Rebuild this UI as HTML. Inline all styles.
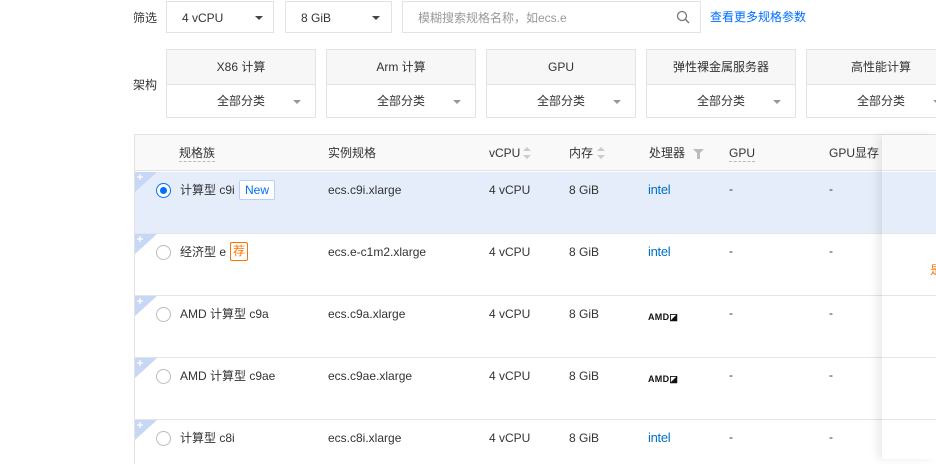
<!DOCTYPE html>
<html><head><meta charset="utf-8"><style>
*{margin:0;padding:0;box-sizing:border-box}
body{width:936px;height:459px;overflow:hidden;background:#fff;font-family:"Liberation Sans","Noto Sans CJK SC",sans-serif;font-size:12px;color:#333;position:relative;line-height:16px}
.a{position:absolute;white-space:nowrap}
.box{position:absolute;border:1px solid #e3e3e3;background:#fff}
.caret{position:absolute;width:0;height:0;border-left:4px solid transparent;border-right:4px solid transparent;border-top:4px solid #444}
.caretg{border-top-color:#999}
.radio{position:absolute;width:15px;height:15px;border-radius:50%;border:1px solid #bbb;background:#fff}
.intel{position:absolute;color:#0071c5;font-size:13px;letter-spacing:-0.3px}
.amd{position:absolute;font-weight:bold;font-size:9px;color:#111;letter-spacing:0.3px}
.arch{position:absolute;border:1px solid #e3e3e3;background:#fff;width:150px;height:69px}
.arch .h{height:35px;background:#f7f7f7;border-bottom:1px solid #e3e3e3;text-align:center;line-height:34px}
.arch .b{text-align:center;line-height:32px}
</style></head><body>
<div class="a" style="left:133px;top:10px">筛选</div>
<div class="box" style="left:166px;top:1px;width:108px;height:32px"><span class="a" style="left:15px;top:8px">4 vCPU</span><span class="caret" style="left:88px;top:14px"></span></div>
<div class="box" style="left:285px;top:1px;width:107px;height:32px"><span class="a" style="left:15px;top:8px">8 GiB</span><span class="caret" style="left:86px;top:14px"></span></div>
<div class="box" style="left:402px;top:1px;width:299px;height:32px"><span class="a" style="left:15px;top:8px;color:#999">模糊搜索规格名称，如ecs.e</span>
<svg class="a" style="left:273px;top:8px" width="14" height="14" viewBox="0 0 14 14"><circle cx="6" cy="6" r="4.5" fill="none" stroke="#777" stroke-width="1.3"/><path d="M9.3 9.3L13 13" stroke="#777" stroke-width="1.4"/></svg></div>
<div class="a" style="left:710px;top:9px;color:#006eff">查看更多规格参数</div>
<div class="a" style="left:133px;top:77px">架构</div>

<div class="arch" style="left:166px;top:49px"><div class="h">X86 计算</div><div class="b">全部分类</div><span class="caret caretg" style="left:126px;top:50px"></span></div>
<div class="arch" style="left:326px;top:49px"><div class="h">Arm 计算</div><div class="b">全部分类</div><span class="caret caretg" style="left:126px;top:50px"></span></div>
<div class="arch" style="left:486px;top:49px"><div class="h">GPU</div><div class="b">全部分类</div><span class="caret caretg" style="left:126px;top:50px"></span></div>
<div class="arch" style="left:646px;top:49px"><div class="h">弹性裸金属服务器</div><div class="b">全部分类</div><span class="caret caretg" style="left:126px;top:50px"></span></div>
<div class="arch" style="left:806px;top:49px"><div class="h">高性能计算</div><div class="b">全部分类</div><span class="caret caretg" style="left:126px;top:50px"></span></div>

<div class="a" style="left:134px;top:134px;width:802px;height:330px;border-left:1px solid #e3e3e3;border-top:1px solid #e3e3e3"></div>
<div class="a" style="left:135px;top:135px;width:801px;height:36px;background:#f9f9f9;border-bottom:1px solid #e3e3e3"></div>
<div class="a" style="left:135px;top:172px;width:801px;height:61px;background:#e5edfa"></div>
<div class="a" style="left:135px;top:233px;width:801px;height:1px;background:#e5e5e5"></div>
<div class="a" style="left:135px;top:295px;width:801px;height:1px;background:#e5e5e5"></div>
<div class="a" style="left:135px;top:357px;width:801px;height:1px;background:#e5e5e5"></div>
<div class="a" style="left:135px;top:419px;width:801px;height:1px;background:#e5e5e5"></div>
<div class="a" style="left:882px;top:135px;width:54px;height:324px;background:#fff;box-shadow:-5px 0 8px rgba(0,0,0,0.08)"></div>
<div class="a" style="left:882px;top:135px;width:54px;height:36px;background:#f9f9f9;border-bottom:1px solid #e3e3e3"></div>
<div class="a" style="left:882px;top:172px;width:54px;height:61px;background:#e5edfa"></div>
<div class="a" style="left:882px;top:233px;width:54px;height:1px;background:#e5e5e5"></div>
<div class="a" style="left:882px;top:295px;width:54px;height:1px;background:#e5e5e5"></div>
<div class="a" style="left:882px;top:357px;width:54px;height:1px;background:#e5e5e5"></div>
<div class="a" style="left:882px;top:419px;width:54px;height:1px;background:#e5e5e5"></div>
<div class="a" style="left:930px;top:262px;color:#ff7200">是</div>

<div class="a" style="left:179px;top:145px;border-bottom:1px dashed #bbb;line-height:16px">规格族</div>
<div class="a" style="left:328px;top:145px">实例规格</div>
<div class="a" style="left:489px;top:145px">vCPU</div>
<svg class="a" style="left:523px;top:147px" width="8" height="12"><path d="M4 0L8 4H0z" fill="#ccc"/><path d="M4 12L8 8H0z" fill="#ccc"/></svg>
<div class="a" style="left:569px;top:145px">内存</div>
<svg class="a" style="left:597px;top:147px" width="8" height="12"><path d="M4 0L8 4H0z" fill="#ccc"/><path d="M4 12L8 8H0z" fill="#ccc"/></svg>
<div class="a" style="left:649px;top:145px">处理器</div>
<svg class="a" style="left:693px;top:149px" width="11" height="10"><path d="M0 0H11L7 4V10H4V4z" fill="#bbb"/></svg>
<div class="a" style="left:729px;top:145px;border-bottom:1px dashed #bbb;line-height:16px">GPU</div>
<div class="a" style="left:829px;top:145px">GPU显存</div>

<svg class="a" style="left:135px;top:172px" width="22" height="20"><path d="M0 0H22L0 20z" fill="#c7d8f6"/><path d="M5 2V8M2 5H8" stroke="#fff" stroke-width="1.3"/></svg>
<div class="radio" style="left:156px;top:183px;border-color:#006eff"><div style="position:absolute;left:3px;top:3px;width:7px;height:7px;border-radius:50%;background:#006eff"></div></div>
<div class="a" style="left:180px;top:182px">计算型 c9i</div>
<div class="a" style="left:239px;top:180px;border:1px solid #b8cff5;background:#fff;color:#006eff;padding:0 5px;line-height:18px;font-size:12px;border-radius:2px">New</div>
<div class="a" style="left:328px;top:182px">ecs.c9i.xlarge</div>
<div class="a" style="left:489px;top:182px">4 vCPU</div>
<div class="a" style="left:569px;top:182px">8 GiB</div>
<div class="intel" style="left:648px;top:182px">intel</div>
<div class="a" style="left:729px;top:181px">-</div>
<div class="a" style="left:829px;top:181px">-</div>

<svg class="a" style="left:135px;top:234px" width="22" height="20"><path d="M0 0H22L0 20z" fill="#c7d8f6"/><path d="M5 2V8M2 5H8" stroke="#fff" stroke-width="1.3"/></svg>
<div class="radio" style="left:156px;top:245px"></div>
<div class="a" style="left:180px;top:244px">经济型 e</div>
<div class="a" style="left:230px;top:242px;border:1px solid #ff7200;color:#ff7200;padding:0 2px;line-height:17px;border-radius:2px">荐</div>
<div class="a" style="left:328px;top:244px">ecs.e-c1m2.xlarge</div>
<div class="a" style="left:489px;top:244px">4 vCPU</div>
<div class="a" style="left:569px;top:244px">8 GiB</div>
<div class="intel" style="left:648px;top:244px">intel</div>
<div class="a" style="left:729px;top:243px">-</div>
<div class="a" style="left:829px;top:243px">-</div>

<svg class="a" style="left:135px;top:296px" width="22" height="20"><path d="M0 0H22L0 20z" fill="#c7d8f6"/><path d="M5 2V8M2 5H8" stroke="#fff" stroke-width="1.3"/></svg>
<div class="radio" style="left:156px;top:307px"></div>
<div class="a" style="left:180px;top:306px">AMD 计算型 c9a</div>
<div class="a" style="left:328px;top:306px">ecs.c9a.xlarge</div>
<div class="a" style="left:489px;top:306px">4 vCPU</div>
<div class="a" style="left:569px;top:306px">8 GiB</div>
<div class="amd" style="left:648px;top:309px">AMD◪</div>
<div class="a" style="left:729px;top:305px">-</div>
<div class="a" style="left:829px;top:305px">-</div>

<svg class="a" style="left:135px;top:358px" width="22" height="20"><path d="M0 0H22L0 20z" fill="#c7d8f6"/><path d="M5 2V8M2 5H8" stroke="#fff" stroke-width="1.3"/></svg>
<div class="radio" style="left:156px;top:369px"></div>
<div class="a" style="left:180px;top:368px">AMD 计算型 c9ae</div>
<div class="a" style="left:328px;top:368px">ecs.c9ae.xlarge</div>
<div class="a" style="left:489px;top:368px">4 vCPU</div>
<div class="a" style="left:569px;top:368px">8 GiB</div>
<div class="amd" style="left:648px;top:371px">AMD◪</div>
<div class="a" style="left:729px;top:367px">-</div>
<div class="a" style="left:829px;top:367px">-</div>

<svg class="a" style="left:135px;top:420px" width="22" height="20"><path d="M0 0H22L0 20z" fill="#c7d8f6"/><path d="M5 2V8M2 5H8" stroke="#fff" stroke-width="1.3"/></svg>
<div class="radio" style="left:156px;top:431px"></div>
<div class="a" style="left:180px;top:430px">计算型 c8i</div>
<div class="a" style="left:328px;top:430px">ecs.c8i.xlarge</div>
<div class="a" style="left:489px;top:430px">4 vCPU</div>
<div class="a" style="left:569px;top:430px">8 GiB</div>
<div class="intel" style="left:648px;top:430px">intel</div>
<div class="a" style="left:729px;top:429px">-</div>
<div class="a" style="left:829px;top:429px">-</div>
</body></html>
